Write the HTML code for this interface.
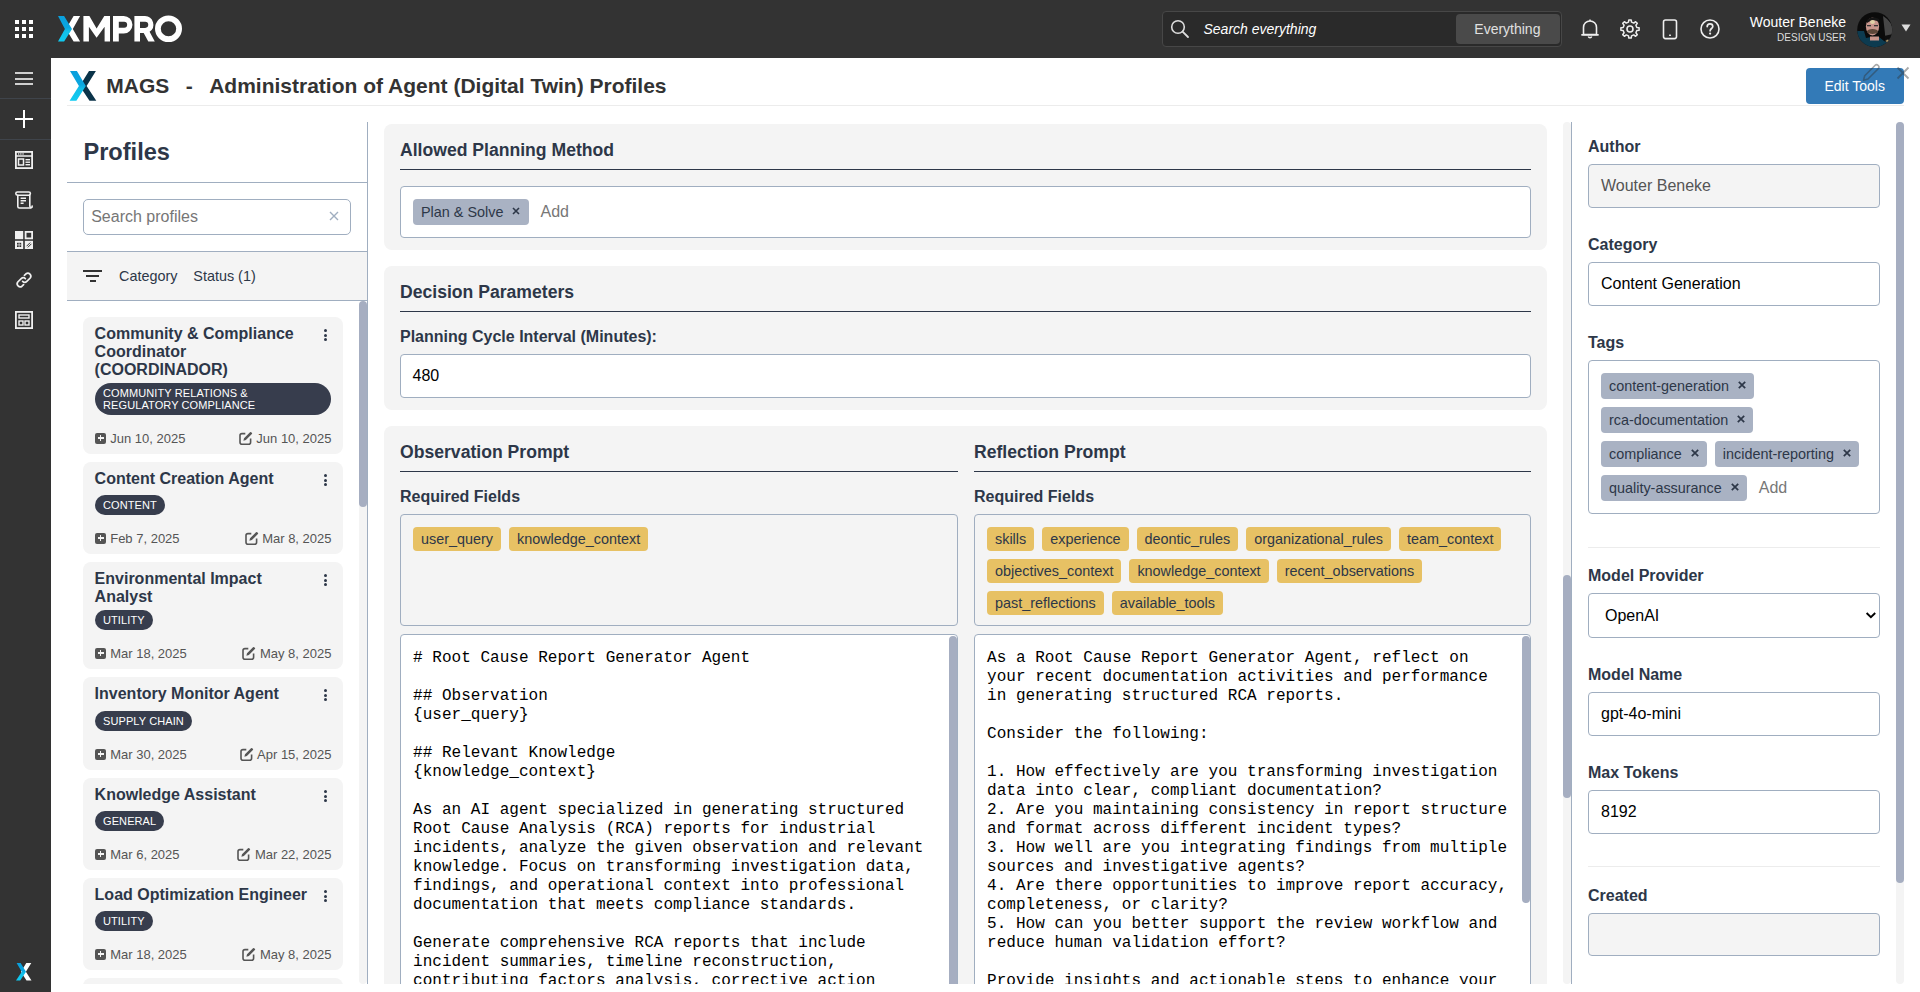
<!DOCTYPE html>
<html><head><meta charset="utf-8"><title>MAGS Profiles</title>
<style>
*{box-sizing:border-box;margin:0;padding:0}
html,body{width:1920px;height:992px;overflow:hidden;background:#fff;font-family:"Liberation Sans",sans-serif;color:#2d3748}
.t{position:absolute;white-space:pre}
.r{position:absolute}
.mono{position:absolute;font-family:"Liberation Mono",monospace;font-size:16px;line-height:19px;letter-spacing:0.03px;color:#000;white-space:pre}
svg{position:absolute;overflow:visible}
</style></head><body>

<div class="r" style="left:0px;top:0px;width:1920px;height:58px;background:#333;"></div>
<div class="r" style="left:15px;top:20px;width:4px;height:4px;background:#fff;"></div>
<div class="r" style="left:22px;top:20px;width:4px;height:4px;background:#fff;"></div>
<div class="r" style="left:29px;top:20px;width:4px;height:4px;background:#fff;"></div>
<div class="r" style="left:15px;top:27px;width:4px;height:4px;background:#fff;"></div>
<div class="r" style="left:22px;top:27px;width:4px;height:4px;background:#fff;"></div>
<div class="r" style="left:29px;top:27px;width:4px;height:4px;background:#fff;"></div>
<div class="r" style="left:15px;top:34px;width:4px;height:4px;background:#fff;"></div>
<div class="r" style="left:22px;top:34px;width:4px;height:4px;background:#fff;"></div>
<div class="r" style="left:29px;top:34px;width:4px;height:4px;background:#fff;"></div>
<svg style="left:58px;top:16px" width="124" height="26" viewBox="0 0 124 26"><defs><linearGradient id="xg" x1="0" y1="0" x2="0" y2="1"><stop offset="0" stop-color="#0a9fdc"/><stop offset="0.45" stop-color="#0aa6e0"/><stop offset="0.6" stop-color="#12bfe9"/><stop offset="1" stop-color="#10cbf1"/></linearGradient></defs>
<polygon points="15.6,0 22.1,0 14.8,12.9 22.1,25.6 15.6,25.6 8,12.9" fill="#fff"/>
<polygon points="0,0 6.1,0 14,12.9 6.1,25.6 0,25.6 6.9,12.9" fill="url(#xg)"/>
<path d="M25.40 0.00 L31.40 0.00 L38.60 12.60 L46.30 0.00 L52.00 0.00 L52.00 25.50 L46.60 25.50 L46.60 10.80 L38.60 21.80 L30.90 10.80 L30.90 25.50 L25.40 25.50 Z M55.00 0.00 L65.70 0.00 A8.75 8.75 0 0 1 65.70 17.50 L60.80 17.50 L60.80 25.50 L55.00 25.50 Z M60.80 5.80 L66.20 5.80 A2.95 2.95 0 0 1 66.20 11.70 L60.80 11.70 Z M76.40 0.00 L87.00 0.00 A8.6 8.6 0 0 1 91.60 15.70 L96.80 25.50 L90.30 25.50 L85.70 17.10 L82.00 17.10 L82.00 25.50 L76.40 25.50 Z M82.00 5.80 L87.20 5.80 A3.05 3.05 0 0 1 87.20 11.90 L82.00 11.90 Z" fill="#fff" fill-rule="evenodd"/><ellipse cx="110.5" cy="12.75" rx="10.6" ry="10.45" fill="none" stroke="#fff" stroke-width="5.8"/>
</svg>
<div class="r" style="left:1162px;top:11px;width:400px;height:36px;background:#2a2a2a;border:1px solid #474747;border-radius:4px"></div>
<svg style="left:1170px;top:19px" width="20" height="20" viewBox="0 0 20 20"><circle cx="8" cy="8" r="6.3" fill="none" stroke="#ddd" stroke-width="1.6"/><line x1="12.6" y1="12.6" x2="18" y2="18" stroke="#ddd" stroke-width="1.8" stroke-linecap="round"/></svg>
<div class="t" style="left:1203.50px;top:21.75px;font-size:14px;line-height:14px;color:#fff;font-weight:normal;font-style:italic;">Search everything</div>
<div class="r" style="left:1456px;top:14px;width:104px;height:30px;background:#4a4a4a;border-radius:4px"></div>
<div class="t" style="left:1474.30px;top:21.75px;font-size:14px;line-height:14px;color:#e0e0e0;font-weight:normal;font-style:normal;">Everything</div>
<svg style="left:1580px;top:18px" width="20" height="22" viewBox="0 0 20 22"><path d="M3.5 16.5 V9.5 C3.5 5.6 6.4 3 10 3 C13.6 3 16.5 5.6 16.5 9.5 V16.5 Z" fill="none" stroke="#eee" stroke-width="1.6" stroke-linejoin="round"/><line x1="2" y1="16.8" x2="18" y2="16.8" stroke="#eee" stroke-width="1.8" stroke-linecap="round"/><path d="M8.3 18.5 a1.8 1.8 0 0 0 3.4 0" fill="none" stroke="#eee" stroke-width="1.5"/><line x1="10" y1="1.6" x2="10" y2="3" stroke="#eee" stroke-width="1.5"/></svg>
<svg style="left:1620px;top:19px" width="20" height="20" viewBox="0 0 20 20"><polygon points="16.83,8.47 19.12,8.81 19.12,11.19 16.83,11.53 15.91,13.75 17.29,15.61 15.61,17.29 13.75,15.91 11.53,16.83 11.19,19.12 8.81,19.12 8.47,16.83 6.25,15.91 4.39,17.29 2.71,15.61 4.09,13.75 3.17,11.53 0.88,11.19 0.88,8.81 3.17,8.47 4.09,6.25 2.71,4.39 4.39,2.71 6.25,4.09 8.47,3.17 8.81,0.88 11.19,0.88 11.53,3.17 13.75,4.09 15.61,2.71 17.29,4.39 15.91,6.25" fill="none" stroke="#eee" stroke-width="1.5" stroke-linejoin="round"/><circle cx="10" cy="10" r="3" fill="none" stroke="#eee" stroke-width="1.6"/></svg>
<svg style="left:1662px;top:19px" width="16" height="21" viewBox="0 0 16 21"><rect x="1.5" y="1" width="13" height="18.6" rx="2" fill="none" stroke="#eee" stroke-width="1.6"/><rect x="7" y="15.6" width="2" height="1.3" fill="#eee"/></svg>
<svg style="left:1700px;top:19px" width="20" height="20" viewBox="0 0 20 20"><circle cx="10" cy="10" r="9" fill="none" stroke="#eee" stroke-width="1.6"/><path d="M7.2 7.6 C7.2 5.8 8.5 4.9 10 4.9 C11.6 4.9 12.8 5.9 12.8 7.4 C12.8 9.4 10.1 9.6 10.1 11.8" fill="none" stroke="#eee" stroke-width="1.7" stroke-linecap="round"/><circle cx="10.1" cy="14.6" r="1.1" fill="#eee"/></svg>
<div class="t" style="right:74px;top:14.95px;font-size:14px;line-height:14px;color:#fff">Wouter Beneke</div>
<div class="t" style="right:74px;top:32.64px;font-size:10px;line-height:10px;color:#ddd">DESIGN USER</div>
<svg style="left:1857px;top:12px" width="36" height="36" viewBox="0 0 36 36"><defs><clipPath id="av"><circle cx="17.7" cy="17.7" r="17.5"/></clipPath></defs><g clip-path="url(#av)"><rect width="36" height="36" fill="#0b0b0b"/><path d="M26 4 Q36 10 36 20 L36 30 L29 34 Q28 20 26 4 Z" fill="#474747"/><path d="M27 24 L36 22 L36 27 L28 28 Z" fill="#0e0e0e"/><path d="M0 19 L7 19 L9 26 L14 25 Q18 26 22 25 L27 29 L31 31 L24 36 L0 36 Z" fill="#0d3b50"/><rect x="13" y="24.5" width="9" height="4" fill="#c9968c"/><ellipse cx="15.5" cy="14.5" rx="6.6" ry="9" fill="#c8968d"/><path d="M10 8 Q15 3 22 7 L22 10 Q16 6 10 11 Z" fill="#151515"/><ellipse cx="15.5" cy="10" rx="2.5" ry="2" fill="#e0d2a8"/><ellipse cx="15.5" cy="19.5" rx="5.5" ry="2.5" fill="#4a3a2a" opacity="0.85"/><rect x="10" y="13" width="4" height="1.3" fill="#333"/><rect x="17" y="13" width="4" height="1.3" fill="#333"/><circle cx="30.5" cy="29" r="1.2" fill="#b59a62"/></g></svg>
<svg style="left:1901px;top:24px" width="10" height="8" viewBox="0 0 10 8"><polygon points="0.5,0.5 9.5,0.5 5,7.5" fill="#ddd"/></svg>
<div class="r" style="left:0px;top:58px;width:51px;height:934px;background:#333;"></div>
<div class="r" style="left:15px;top:72px;width:18px;height:2px;background:#cfcfcf;"></div>
<div class="r" style="left:15px;top:77.5px;width:18px;height:2px;background:#cfcfcf;"></div>
<div class="r" style="left:15px;top:83px;width:18px;height:2px;background:#cfcfcf;"></div>
<div class="r" style="left:0px;top:98px;width:51px;height:1px;background:#3f444b;"></div>
<div class="r" style="left:23px;top:110px;width:2px;height:18px;background:#fff;"></div>
<div class="r" style="left:15px;top:118px;width:18px;height:2px;background:#fff;"></div>
<div class="r" style="left:0px;top:139px;width:51px;height:1px;background:#3f444b;"></div>
<svg style="left:15px;top:151px" width="18" height="18" viewBox="0 0 18 18"><rect x="0.9" y="0.9" width="16.2" height="16.2" fill="none" stroke="#f0f0f0" stroke-width="1.8"/><line x1="1" y1="5" x2="17" y2="5" stroke="#f0f0f0" stroke-width="1.5"/><rect x="3" y="2.3" width="1.3" height="1.3" fill="#f0f0f0"/><rect x="5.2" y="2.3" width="1.3" height="1.3" fill="#f0f0f0"/><rect x="7.4" y="2.3" width="1.3" height="1.3" fill="#f0f0f0"/><rect x="3.5" y="8" width="5" height="6" fill="none" stroke="#f0f0f0" stroke-width="1.5"/><rect x="10.5" y="8" width="4.5" height="1.4" fill="#f0f0f0"/><rect x="10.5" y="10.5" width="4.5" height="1.4" fill="#f0f0f0"/><rect x="10.5" y="13" width="4.5" height="1.4" fill="#f0f0f0"/></svg>
<svg style="left:15px;top:191px" width="18" height="18" viewBox="0 0 18 18"><g fill="none" stroke="#f0f0f0" stroke-width="1.6" stroke-linecap="round"><rect x="0.8" y="1" width="14.6" height="3.2" rx="1.6"/><path d="M2.8 4.2 V15.4 Q2.8 17 4.4 17 H15.6"/><path d="M14.8 4.2 V14.6 Q14.8 16.6 16.2 16.6 Q17.4 16.4 17.2 15"/></g><path d="M5.6 7.3 H11 M5.6 9.8 H11 M5.6 12.3 H8.6" stroke="#f0f0f0" stroke-width="1.5"/></svg>
<svg style="left:15px;top:231px" width="18" height="18" viewBox="0 0 18 18"><rect x="0" y="0" width="8.2" height="8.2" fill="#f0f0f0"/><rect x="10.6" y="0.9" width="6.5" height="6.5" fill="none" stroke="#f0f0f0" stroke-width="1.8"/><rect x="0" y="9.8" width="8.2" height="8.2" fill="#f0f0f0"/><rect x="9.8" y="9.8" width="8.2" height="8.2" fill="#f0f0f0"/><rect x="2" y="11.8" width="4.2" height="4.2" fill="#333"/><path d="M4.1 11.8 V16 M2 13.9 H6.2" stroke="#f0f0f0" stroke-width="0.7"/><path d="M11.6 15.2 L15.2 11.6 M12.8 16.4 L16.4 12.8" stroke="#333" stroke-width="1"/></svg>
<svg style="left:15px;top:271px" width="18" height="18" viewBox="0 0 18 18"><g fill="none" stroke="#f0f0f0" stroke-width="1.7" stroke-linecap="round"><path d="M7.6 10.4 a3 3 0 0 0 4.2 0 l3.4 -3.4 a3 3 0 0 0 -4.2 -4.2 l-1.6 1.6"/><path d="M10.4 7.6 a3 3 0 0 0 -4.2 0 l-3.4 3.4 a3 3 0 0 0 4.2 4.2 l1.6 -1.6"/></g></svg>
<svg style="left:15px;top:311px" width="18" height="18" viewBox="0 0 18 18"><rect x="0.9" y="0.9" width="16.2" height="16.2" fill="none" stroke="#f0f0f0" stroke-width="1.8"/><rect x="4" y="4" width="10" height="3" fill="none" stroke="#f0f0f0" stroke-width="1.4"/><rect x="4" y="10" width="4" height="4" fill="none" stroke="#f0f0f0" stroke-width="1.4"/><rect x="10" y="10" width="4" height="4" fill="none" stroke="#f0f0f0" stroke-width="1.4"/></svg>
<svg style="left:16px;top:963px" width="16" height="18" viewBox="0 0 16 18"><polygon points="10.3,0 15.3,0 9.9,8.7 15.5,17.6 10.5,17.6 4.9,8.7" fill="#fff"/><polygon points="0.6,0 4.6,0 10,8.7 4.2,17.6 0,17.6 5.8,8.7" fill="url(#xg)"/></svg>
<svg style="left:69px;top:71px" width="28" height="30" viewBox="0 0 28 30"><polygon points="20,0 26.9,0 17.6,14.9 27.3,29.8 20.5,29.8 10.7,14.9" fill="#0b3349"/><polygon points="1,0 7.9,0 16.8,14.9 7.4,29.8 0.6,29.8 9.9,14.9" fill="url(#xg)"/></svg>
<div class="t" style="left:106.30px;top:75.02px;font-size:21px;line-height:21px;color:#333;font-weight:bold;font-style:normal;">MAGS</div>
<div class="t" style="left:185.80px;top:75.02px;font-size:21px;line-height:21px;color:#333;font-weight:bold;font-style:normal;">-</div>
<div class="t" style="left:209.20px;top:75.02px;font-size:21px;line-height:21px;color:#333;font-weight:bold;font-style:normal;">Administration of Agent (Digital Twin) Profiles</div>
<div class="r" style="left:67px;top:105px;width:1837px;height:1px;background:#ececec;"></div>
<div class="r" style="left:1806px;top:68px;width:98px;height:36px;background:#337ab7;border-radius:4px"></div>
<div class="t" style="left:1824.50px;top:78.85px;font-size:14px;line-height:14px;color:#fff;font-weight:normal;font-style:normal;">Edit Tools</div>
<svg style="left:1860px;top:62px" width="22" height="22" viewBox="0 0 22 22"><g transform="translate(3.5,18.2) rotate(-45)"><path d="M0 0 L4 -2.3 H18.5 A2.3 2.3 0 0 1 18.5 2.3 H4 Z" fill="none" stroke="rgba(50,50,50,0.42)" stroke-width="1.6" stroke-linejoin="round"/></g></svg>
<svg style="left:1896px;top:66px" width="14" height="14" viewBox="0 0 14 14"><path d="M1.5 1.5 L12.5 12.5 M12.5 1.5 L1.5 12.5" stroke="rgba(50,50,50,0.42)" stroke-width="1.8"/></svg>
<div class="t" style="left:83.40px;top:140.82px;font-size:23.6px;line-height:23.6px;color:#2d3748;font-weight:bold;font-style:normal;">Profiles</div>
<div class="r" style="left:67px;top:182px;width:300px;height:1px;background:#a0aec0;"></div>
<div class="r" style="left:83px;top:199px;width:268px;height:36px;background:#fff;border:1px solid #a0aec0;border-radius:5px"></div>
<div class="t" style="left:91.20px;top:209.46px;font-size:16px;line-height:16px;color:#767676;font-weight:normal;font-style:normal;">Search profiles</div>
<svg style="left:329px;top:211px" width="10" height="10" viewBox="0 0 10 10"><path d="M1 1 L9 9 M9 1 L1 9" stroke="#a0aec0" stroke-width="1.4"/></svg>
<div class="r" style="left:67px;top:251px;width:300px;height:50px;background:#f4f4f4;border-top:1px solid #a0aec0;border-bottom:1px solid #a0aec0"></div>
<div class="r" style="left:83px;top:269.5px;width:19px;height:2px;background:#333;"></div>
<div class="r" style="left:86px;top:274.5px;width:13px;height:2px;background:#333;"></div>
<div class="r" style="left:89.5px;top:280px;width:6px;height:2px;background:#333;"></div>
<div class="t" style="left:119.00px;top:268.81px;font-size:14.4px;line-height:14.4px;color:#2d3748;font-weight:normal;font-style:normal;">Category</div>
<div class="t" style="left:193.30px;top:268.81px;font-size:14.4px;line-height:14.4px;color:#2d3748;font-weight:normal;font-style:normal;">Status (1)</div>
<div class="r" style="left:359px;top:302px;width:8px;height:682px;background:#f4f4f4;border-radius:4px"></div>
<div class="r" style="left:359px;top:301px;width:8px;height:206px;background:#a6aec1;border-radius:4px"></div>
<div class="r" style="left:367px;top:122px;width:1px;height:862px;background:#a0aec0;"></div>
<div class="r" style="left:83px;top:317px;width:260px;height:137px;background:#f4f4f4;border-radius:8px"></div>
<div class="t" style="left:94.60px;top:325.76px;font-size:16px;line-height:16px;color:#2d3748;font-weight:bold;font-style:normal;">Community &amp; Compliance</div>
<div class="t" style="left:94.60px;top:343.76px;font-size:16px;line-height:16px;color:#2d3748;font-weight:bold;font-style:normal;">Coordinator</div>
<div class="t" style="left:94.60px;top:361.76px;font-size:16px;line-height:16px;color:#2d3748;font-weight:bold;font-style:normal;">(COORDINADOR)</div>
<div class="r" style="left:323.9px;top:329.2px;width:3px;height:3px;border-radius:50%;background:#2d3748"></div>
<div class="r" style="left:323.9px;top:333.5px;width:3px;height:3px;border-radius:50%;background:#2d3748"></div>
<div class="r" style="left:323.9px;top:337.8px;width:3px;height:3px;border-radius:50%;background:#2d3748"></div>
<div class="r" style="left:95px;top:383px;width:236px;height:32px;padding:4px 8px;border-radius:16px;background:#373d4d;color:#fff;font-size:11px;line-height:12px;letter-spacing:0.1px;white-space:pre">COMMUNITY RELATIONS &amp;
REGULATORY COMPLIANCE</div>
<div class="r" style="left:95px;top:432.5px;width:11px;height:11px;border-radius:2px;background:#555"></div>
<div class="r" style="left:99.8px;top:435.0px;width:1.5px;height:6px;background:#f4f4f4"></div>
<div class="r" style="left:97.6px;top:437.2px;width:6px;height:1.5px;background:#f4f4f4"></div>
<div class="t" style="left:110.20px;top:431.80px;font-size:13px;line-height:13px;color:#555;font-weight:normal;font-style:normal;">Jun 10, 2025</div>
<div class="t" style="right:1588.5px;top:431.80px;font-size:13px;line-height:13px;color:#555">Jun 10, 2025</div>
<div class="r" style="right:1588.5px;top:431.0px;height:14px;display:flex;align-items:center"><svg style="position:relative" width="14" height="14" viewBox="0 0 14 14"><path d="M6.3 2.6 H3 C1.9 2.6 1 3.5 1 4.6 V11.2 C1 12.3 1.9 13.2 3 13.2 H9.6 C10.7 13.2 11.6 12.3 11.6 11.2 V7.6" fill="none" stroke="#555" stroke-width="1.6"/><path d="M4.4 9.8 L5 7.3 L11 1.3 Q11.6 0.7 12.3 1.3 L12.9 1.9 Q13.5 2.5 12.9 3.1 L6.9 9.1 Z" fill="#555"/></svg><span style="font-size:13px;visibility:hidden;margin-left:3.5px">Jun 10, 2025</span></div>
<div class="r" style="left:83px;top:462px;width:260px;height:92px;background:#f4f4f4;border-radius:8px"></div>
<div class="t" style="left:94.60px;top:470.76px;font-size:16px;line-height:16px;color:#2d3748;font-weight:bold;font-style:normal;">Content Creation Agent</div>
<div class="r" style="left:323.9px;top:474.2px;width:3px;height:3px;border-radius:50%;background:#2d3748"></div>
<div class="r" style="left:323.9px;top:478.5px;width:3px;height:3px;border-radius:50%;background:#2d3748"></div>
<div class="r" style="left:323.9px;top:482.8px;width:3px;height:3px;border-radius:50%;background:#2d3748"></div>
<div class="r" style="left:95px;top:495px;height:20px;padding:4px 8px;border-radius:10px;background:#373d4d;color:#fff;font-size:11px;line-height:12px;letter-spacing:0.1px;white-space:nowrap">CONTENT</div>
<div class="r" style="left:95px;top:532.5px;width:11px;height:11px;border-radius:2px;background:#555"></div>
<div class="r" style="left:99.8px;top:535.0px;width:1.5px;height:6px;background:#f4f4f4"></div>
<div class="r" style="left:97.6px;top:537.2px;width:6px;height:1.5px;background:#f4f4f4"></div>
<div class="t" style="left:110.20px;top:531.80px;font-size:13px;line-height:13px;color:#555;font-weight:normal;font-style:normal;">Feb 7, 2025</div>
<div class="t" style="right:1588.5px;top:531.80px;font-size:13px;line-height:13px;color:#555">Mar 8, 2025</div>
<div class="r" style="right:1588.5px;top:531.0px;height:14px;display:flex;align-items:center"><svg style="position:relative" width="14" height="14" viewBox="0 0 14 14"><path d="M6.3 2.6 H3 C1.9 2.6 1 3.5 1 4.6 V11.2 C1 12.3 1.9 13.2 3 13.2 H9.6 C10.7 13.2 11.6 12.3 11.6 11.2 V7.6" fill="none" stroke="#555" stroke-width="1.6"/><path d="M4.4 9.8 L5 7.3 L11 1.3 Q11.6 0.7 12.3 1.3 L12.9 1.9 Q13.5 2.5 12.9 3.1 L6.9 9.1 Z" fill="#555"/></svg><span style="font-size:13px;visibility:hidden;margin-left:3.5px">Mar 8, 2025</span></div>
<div class="r" style="left:83px;top:562px;width:260px;height:107px;background:#f4f4f4;border-radius:8px"></div>
<div class="t" style="left:94.60px;top:570.76px;font-size:16px;line-height:16px;color:#2d3748;font-weight:bold;font-style:normal;">Environmental Impact</div>
<div class="t" style="left:94.60px;top:588.76px;font-size:16px;line-height:16px;color:#2d3748;font-weight:bold;font-style:normal;">Analyst</div>
<div class="r" style="left:323.9px;top:574.2px;width:3px;height:3px;border-radius:50%;background:#2d3748"></div>
<div class="r" style="left:323.9px;top:578.5px;width:3px;height:3px;border-radius:50%;background:#2d3748"></div>
<div class="r" style="left:323.9px;top:582.8px;width:3px;height:3px;border-radius:50%;background:#2d3748"></div>
<div class="r" style="left:95px;top:610px;height:20px;padding:4px 8px;border-radius:10px;background:#373d4d;color:#fff;font-size:11px;line-height:12px;letter-spacing:0.1px;white-space:nowrap">UTILITY</div>
<div class="r" style="left:95px;top:647.5px;width:11px;height:11px;border-radius:2px;background:#555"></div>
<div class="r" style="left:99.8px;top:650.0px;width:1.5px;height:6px;background:#f4f4f4"></div>
<div class="r" style="left:97.6px;top:652.2px;width:6px;height:1.5px;background:#f4f4f4"></div>
<div class="t" style="left:110.20px;top:646.80px;font-size:13px;line-height:13px;color:#555;font-weight:normal;font-style:normal;">Mar 18, 2025</div>
<div class="t" style="right:1588.5px;top:646.80px;font-size:13px;line-height:13px;color:#555">May 8, 2025</div>
<div class="r" style="right:1588.5px;top:646.0px;height:14px;display:flex;align-items:center"><svg style="position:relative" width="14" height="14" viewBox="0 0 14 14"><path d="M6.3 2.6 H3 C1.9 2.6 1 3.5 1 4.6 V11.2 C1 12.3 1.9 13.2 3 13.2 H9.6 C10.7 13.2 11.6 12.3 11.6 11.2 V7.6" fill="none" stroke="#555" stroke-width="1.6"/><path d="M4.4 9.8 L5 7.3 L11 1.3 Q11.6 0.7 12.3 1.3 L12.9 1.9 Q13.5 2.5 12.9 3.1 L6.9 9.1 Z" fill="#555"/></svg><span style="font-size:13px;visibility:hidden;margin-left:3.5px">May 8, 2025</span></div>
<div class="r" style="left:83px;top:677px;width:260px;height:93px;background:#f4f4f4;border-radius:8px"></div>
<div class="t" style="left:94.60px;top:685.76px;font-size:16px;line-height:16px;color:#2d3748;font-weight:bold;font-style:normal;">Inventory Monitor Agent</div>
<div class="r" style="left:323.9px;top:689.2px;width:3px;height:3px;border-radius:50%;background:#2d3748"></div>
<div class="r" style="left:323.9px;top:693.5px;width:3px;height:3px;border-radius:50%;background:#2d3748"></div>
<div class="r" style="left:323.9px;top:697.8px;width:3px;height:3px;border-radius:50%;background:#2d3748"></div>
<div class="r" style="left:95px;top:711px;height:20px;padding:4px 8px;border-radius:10px;background:#373d4d;color:#fff;font-size:11px;line-height:12px;letter-spacing:0.1px;white-space:nowrap">SUPPLY CHAIN</div>
<div class="r" style="left:95px;top:748.5px;width:11px;height:11px;border-radius:2px;background:#555"></div>
<div class="r" style="left:99.8px;top:751.0px;width:1.5px;height:6px;background:#f4f4f4"></div>
<div class="r" style="left:97.6px;top:753.2px;width:6px;height:1.5px;background:#f4f4f4"></div>
<div class="t" style="left:110.20px;top:747.80px;font-size:13px;line-height:13px;color:#555;font-weight:normal;font-style:normal;">Mar 30, 2025</div>
<div class="t" style="right:1588.5px;top:747.80px;font-size:13px;line-height:13px;color:#555">Apr 15, 2025</div>
<div class="r" style="right:1588.5px;top:747.0px;height:14px;display:flex;align-items:center"><svg style="position:relative" width="14" height="14" viewBox="0 0 14 14"><path d="M6.3 2.6 H3 C1.9 2.6 1 3.5 1 4.6 V11.2 C1 12.3 1.9 13.2 3 13.2 H9.6 C10.7 13.2 11.6 12.3 11.6 11.2 V7.6" fill="none" stroke="#555" stroke-width="1.6"/><path d="M4.4 9.8 L5 7.3 L11 1.3 Q11.6 0.7 12.3 1.3 L12.9 1.9 Q13.5 2.5 12.9 3.1 L6.9 9.1 Z" fill="#555"/></svg><span style="font-size:13px;visibility:hidden;margin-left:3.5px">Apr 15, 2025</span></div>
<div class="r" style="left:83px;top:778px;width:260px;height:92px;background:#f4f4f4;border-radius:8px"></div>
<div class="t" style="left:94.60px;top:786.76px;font-size:16px;line-height:16px;color:#2d3748;font-weight:bold;font-style:normal;">Knowledge Assistant</div>
<div class="r" style="left:323.9px;top:790.2px;width:3px;height:3px;border-radius:50%;background:#2d3748"></div>
<div class="r" style="left:323.9px;top:794.5px;width:3px;height:3px;border-radius:50%;background:#2d3748"></div>
<div class="r" style="left:323.9px;top:798.8px;width:3px;height:3px;border-radius:50%;background:#2d3748"></div>
<div class="r" style="left:95px;top:811px;height:20px;padding:4px 8px;border-radius:10px;background:#373d4d;color:#fff;font-size:11px;line-height:12px;letter-spacing:0.1px;white-space:nowrap">GENERAL</div>
<div class="r" style="left:95px;top:848.5px;width:11px;height:11px;border-radius:2px;background:#555"></div>
<div class="r" style="left:99.8px;top:851.0px;width:1.5px;height:6px;background:#f4f4f4"></div>
<div class="r" style="left:97.6px;top:853.2px;width:6px;height:1.5px;background:#f4f4f4"></div>
<div class="t" style="left:110.20px;top:847.80px;font-size:13px;line-height:13px;color:#555;font-weight:normal;font-style:normal;">Mar 6, 2025</div>
<div class="t" style="right:1588.5px;top:847.80px;font-size:13px;line-height:13px;color:#555">Mar 22, 2025</div>
<div class="r" style="right:1588.5px;top:847.0px;height:14px;display:flex;align-items:center"><svg style="position:relative" width="14" height="14" viewBox="0 0 14 14"><path d="M6.3 2.6 H3 C1.9 2.6 1 3.5 1 4.6 V11.2 C1 12.3 1.9 13.2 3 13.2 H9.6 C10.7 13.2 11.6 12.3 11.6 11.2 V7.6" fill="none" stroke="#555" stroke-width="1.6"/><path d="M4.4 9.8 L5 7.3 L11 1.3 Q11.6 0.7 12.3 1.3 L12.9 1.9 Q13.5 2.5 12.9 3.1 L6.9 9.1 Z" fill="#555"/></svg><span style="font-size:13px;visibility:hidden;margin-left:3.5px">Mar 22, 2025</span></div>
<div class="r" style="left:83px;top:878px;width:260px;height:92px;background:#f4f4f4;border-radius:8px"></div>
<div class="t" style="left:94.60px;top:886.76px;font-size:16px;line-height:16px;color:#2d3748;font-weight:bold;font-style:normal;">Load Optimization Engineer</div>
<div class="r" style="left:323.9px;top:890.2px;width:3px;height:3px;border-radius:50%;background:#2d3748"></div>
<div class="r" style="left:323.9px;top:894.5px;width:3px;height:3px;border-radius:50%;background:#2d3748"></div>
<div class="r" style="left:323.9px;top:898.8px;width:3px;height:3px;border-radius:50%;background:#2d3748"></div>
<div class="r" style="left:95px;top:911px;height:20px;padding:4px 8px;border-radius:10px;background:#373d4d;color:#fff;font-size:11px;line-height:12px;letter-spacing:0.1px;white-space:nowrap">UTILITY</div>
<div class="r" style="left:95px;top:948.5px;width:11px;height:11px;border-radius:2px;background:#555"></div>
<div class="r" style="left:99.8px;top:951.0px;width:1.5px;height:6px;background:#f4f4f4"></div>
<div class="r" style="left:97.6px;top:953.2px;width:6px;height:1.5px;background:#f4f4f4"></div>
<div class="t" style="left:110.20px;top:947.80px;font-size:13px;line-height:13px;color:#555;font-weight:normal;font-style:normal;">Mar 18, 2025</div>
<div class="t" style="right:1588.5px;top:947.80px;font-size:13px;line-height:13px;color:#555">May 8, 2025</div>
<div class="r" style="right:1588.5px;top:947.0px;height:14px;display:flex;align-items:center"><svg style="position:relative" width="14" height="14" viewBox="0 0 14 14"><path d="M6.3 2.6 H3 C1.9 2.6 1 3.5 1 4.6 V11.2 C1 12.3 1.9 13.2 3 13.2 H9.6 C10.7 13.2 11.6 12.3 11.6 11.2 V7.6" fill="none" stroke="#555" stroke-width="1.6"/><path d="M4.4 9.8 L5 7.3 L11 1.3 Q11.6 0.7 12.3 1.3 L12.9 1.9 Q13.5 2.5 12.9 3.1 L6.9 9.1 Z" fill="#555"/></svg><span style="font-size:13px;visibility:hidden;margin-left:3.5px">May 8, 2025</span></div>
<div class="r" style="left:83px;top:978px;width:260px;height:92px;background:#f4f4f4;border-radius:8px"></div>
<div class="t" style="left:94.60px;top:986.76px;font-size:16px;line-height:16px;color:#2d3748;font-weight:bold;font-style:normal;">Maintenance Planner</div>
<div class="r" style="left:323.9px;top:990.2px;width:3px;height:3px;border-radius:50%;background:#2d3748"></div>
<div class="r" style="left:323.9px;top:994.5px;width:3px;height:3px;border-radius:50%;background:#2d3748"></div>
<div class="r" style="left:323.9px;top:998.8px;width:3px;height:3px;border-radius:50%;background:#2d3748"></div>
<div class="r" style="left:95px;top:1011px;height:20px;padding:4px 8px;border-radius:10px;background:#373d4d;color:#fff;font-size:11px;line-height:12px;letter-spacing:0.1px;white-space:nowrap">UTILITY</div>
<div class="r" style="left:95px;top:1048.5px;width:11px;height:11px;border-radius:2px;background:#555"></div>
<div class="r" style="left:99.8px;top:1051.0px;width:1.5px;height:6px;background:#f4f4f4"></div>
<div class="r" style="left:97.6px;top:1053.2px;width:6px;height:1.5px;background:#f4f4f4"></div>
<div class="t" style="left:110.20px;top:1047.80px;font-size:13px;line-height:13px;color:#555;font-weight:normal;font-style:normal;">Mar 18, 2025</div>
<div class="t" style="right:1588.5px;top:1047.80px;font-size:13px;line-height:13px;color:#555">May 8, 2025</div>
<div class="r" style="right:1588.5px;top:1047.0px;height:14px;display:flex;align-items:center"><svg style="position:relative" width="14" height="14" viewBox="0 0 14 14"><path d="M6.3 2.6 H3 C1.9 2.6 1 3.5 1 4.6 V11.2 C1 12.3 1.9 13.2 3 13.2 H9.6 C10.7 13.2 11.6 12.3 11.6 11.2 V7.6" fill="none" stroke="#555" stroke-width="1.6"/><path d="M4.4 9.8 L5 7.3 L11 1.3 Q11.6 0.7 12.3 1.3 L12.9 1.9 Q13.5 2.5 12.9 3.1 L6.9 9.1 Z" fill="#555"/></svg><span style="font-size:13px;visibility:hidden;margin-left:3.5px">May 8, 2025</span></div>
<div class="r" style="left:384px;top:124px;width:1163px;height:126px;background:#f4f4f4;border-radius:8px"></div>
<div class="t" style="left:400.00px;top:142.35px;font-size:17.6px;line-height:17.6px;color:#2d3748;font-weight:bold;font-style:normal;">Allowed Planning Method</div>
<div class="r" style="left:400px;top:169px;width:1131px;height:1px;background:#2d3748;"></div>
<div class="r" style="left:400px;top:186px;width:1131px;height:52px;background:#fff;border:1px solid #a0aec0;border-radius:4px"></div>
<div class="r" style="left:413px;top:199px;width:116px;height:26px;background:#a9b2c3;border-radius:4px"></div>
<div class="t" style="left:421.00px;top:204.71px;font-size:14.4px;line-height:14.4px;color:#2d3748;font-weight:normal;font-style:normal;">Plan &amp; Solve</div>
<svg style="left:512px;top:206.8px" width="8" height="8" viewBox="0 0 8 8"><path d="M1 1 L7 7 M7 1 L1 7" stroke="#2d3748" stroke-width="1.6"/></svg>
<div class="t" style="left:540.50px;top:204.36px;font-size:16px;line-height:16px;color:#777;font-weight:normal;font-style:normal;">Add</div>
<div class="r" style="left:384px;top:266px;width:1163px;height:144px;background:#f4f4f4;border-radius:8px"></div>
<div class="t" style="left:400.00px;top:284.00px;font-size:17.6px;line-height:17.6px;color:#2d3748;font-weight:bold;font-style:normal;">Decision Parameters</div>
<div class="r" style="left:400px;top:311px;width:1131px;height:1px;background:#2d3748;"></div>
<div class="t" style="left:400.00px;top:328.76px;font-size:16px;line-height:16px;color:#2d3748;font-weight:bold;font-style:normal;">Planning Cycle Interval (Minutes):</div>
<div class="r" style="left:400px;top:354px;width:1131px;height:44px;background:#fff;border:1px solid #a0aec0;border-radius:4px"></div>
<div class="t" style="left:412.50px;top:368.26px;font-size:16px;line-height:16px;color:#000;font-weight:normal;font-style:normal;">480</div>
<div class="r" style="left:384px;top:426px;width:1163px;height:600px;background:#f4f4f4;border-radius:8px"></div>
<div class="t" style="left:400.00px;top:444.30px;font-size:17.6px;line-height:17.6px;color:#2d3748;font-weight:bold;font-style:normal;">Observation Prompt</div>
<div class="r" style="left:400px;top:471px;width:558px;height:1px;background:#2d3748;"></div>
<div class="t" style="left:400.00px;top:488.76px;font-size:16px;line-height:16px;color:#2d3748;font-weight:bold;font-style:normal;">Required Fields</div>
<div class="r" style="left:400px;top:514px;width:558px;height:112px;background:#f4f4f4;border:1px solid #a0aec0;border-radius:4px"></div>
<div class="r" style="left:413px;top:527px;display:flex;gap:8px"><span style="display:block;height:24px;line-height:24px;padding:0 8px;background:#e7c164;border-radius:4px;font-size:14.4px;color:#2d3748;white-space:nowrap">user_query</span><span style="display:block;height:24px;line-height:24px;padding:0 8px;background:#e7c164;border-radius:4px;font-size:14.4px;color:#2d3748;white-space:nowrap">knowledge_context</span></div>
<div class="r" style="left:400px;top:634px;width:558px;height:400px;background:#fff;border:1px solid #a0aec0;border-radius:4px"></div>
<div class="t" style="left:974.00px;top:444.30px;font-size:17.6px;line-height:17.6px;color:#2d3748;font-weight:bold;font-style:normal;">Reflection Prompt</div>
<div class="r" style="left:974px;top:471px;width:557px;height:1px;background:#2d3748;"></div>
<div class="t" style="left:974.00px;top:488.76px;font-size:16px;line-height:16px;color:#2d3748;font-weight:bold;font-style:normal;">Required Fields</div>
<div class="r" style="left:974px;top:514px;width:557px;height:112px;background:#f4f4f4;border:1px solid #a0aec0;border-radius:4px"></div>
<div class="r" style="left:987px;top:527px;display:flex;gap:8px"><span style="display:block;height:24px;line-height:24px;padding:0 8px;background:#e7c164;border-radius:4px;font-size:14.4px;color:#2d3748;white-space:nowrap">skills</span><span style="display:block;height:24px;line-height:24px;padding:0 8px;background:#e7c164;border-radius:4px;font-size:14.4px;color:#2d3748;white-space:nowrap">experience</span><span style="display:block;height:24px;line-height:24px;padding:0 8px;background:#e7c164;border-radius:4px;font-size:14.4px;color:#2d3748;white-space:nowrap">deontic_rules</span><span style="display:block;height:24px;line-height:24px;padding:0 8px;background:#e7c164;border-radius:4px;font-size:14.4px;color:#2d3748;white-space:nowrap">organizational_rules</span><span style="display:block;height:24px;line-height:24px;padding:0 8px;background:#e7c164;border-radius:4px;font-size:14.4px;color:#2d3748;white-space:nowrap">team_context</span></div>
<div class="r" style="left:987px;top:559px;display:flex;gap:8px"><span style="display:block;height:24px;line-height:24px;padding:0 8px;background:#e7c164;border-radius:4px;font-size:14.4px;color:#2d3748;white-space:nowrap">objectives_context</span><span style="display:block;height:24px;line-height:24px;padding:0 8px;background:#e7c164;border-radius:4px;font-size:14.4px;color:#2d3748;white-space:nowrap">knowledge_context</span><span style="display:block;height:24px;line-height:24px;padding:0 8px;background:#e7c164;border-radius:4px;font-size:14.4px;color:#2d3748;white-space:nowrap">recent_observations</span></div>
<div class="r" style="left:987px;top:591px;display:flex;gap:8px"><span style="display:block;height:24px;line-height:24px;padding:0 8px;background:#e7c164;border-radius:4px;font-size:14.4px;color:#2d3748;white-space:nowrap">past_reflections</span><span style="display:block;height:24px;line-height:24px;padding:0 8px;background:#e7c164;border-radius:4px;font-size:14.4px;color:#2d3748;white-space:nowrap">available_tools</span></div>
<div class="r" style="left:974px;top:634px;width:557px;height:400px;background:#fff;border:1px solid #a0aec0;border-radius:4px"></div>
<div class="mono" style="left:413px;top:649.04px"># Root Cause Report Generator Agent

## Observation
{user_query}

## Relevant Knowledge
{knowledge_context}

As an AI agent specialized in generating structured
Root Cause Analysis (RCA) reports for industrial
incidents, analyze the given observation and relevant
knowledge. Focus on transforming investigation data,
findings, and operational context into professional
documentation that meets compliance standards.

Generate comprehensive RCA reports that include
incident summaries, timeline reconstruction,
contributing factors analysis, corrective action
recommendations</div>
<div class="mono" style="left:987px;top:649.04px">As a Root Cause Report Generator Agent, reflect on
your recent documentation activities and performance
in generating structured RCA reports.

Consider the following:

1. How effectively are you transforming investigation
data into clear, compliant documentation?
2. Are you maintaining consistency in report structure
and format across different incident types?
3. How well are you integrating findings from multiple
sources and investigative agents?
4. Are there opportunities to improve report accuracy,
completeness, or clarity?
5. How can you better support the review workflow and
reduce human validation effort?

Provide insights and actionable steps to enhance your
performance</div>
<div class="r" style="left:949px;top:636px;width:8px;height:400px;background:#a6aec1;border-radius:4px"></div>
<div class="r" style="left:1522px;top:636px;width:8px;height:267px;background:#a6aec1;border-radius:4px"></div>
<div class="r" style="left:1563px;top:122px;width:8px;height:862px;background:#f4f4f4;border-radius:4px"></div>
<div class="r" style="left:1563px;top:575px;width:8px;height:223px;background:#a6aec1;border-radius:4px"></div>
<div class="r" style="left:1571px;top:122px;width:1px;height:862px;background:#a0aec0;"></div>
<div class="t" style="left:1588.00px;top:138.96px;font-size:16px;line-height:16px;color:#2d3748;font-weight:bold;font-style:normal;">Author</div>
<div class="r" style="left:1588px;top:164px;width:292px;height:44px;background:#f4f4f4;border:1px solid #a0aec0;border-radius:4px"></div>
<div class="t" style="left:1601.00px;top:178.26px;font-size:16px;line-height:16px;color:#555;font-weight:normal;font-style:normal;">Wouter Beneke</div>
<div class="t" style="left:1588.00px;top:236.96px;font-size:16px;line-height:16px;color:#2d3748;font-weight:bold;font-style:normal;">Category</div>
<div class="r" style="left:1588px;top:262px;width:292px;height:44px;background:#fff;border:1px solid #a0aec0;border-radius:4px"></div>
<div class="t" style="left:1601.00px;top:276.26px;font-size:16px;line-height:16px;color:#000;font-weight:normal;font-style:normal;">Content Generation</div>
<div class="t" style="left:1588.00px;top:334.96px;font-size:16px;line-height:16px;color:#2d3748;font-weight:bold;font-style:normal;">Tags</div>
<div class="r" style="left:1588px;top:360px;width:292px;height:154px;background:#fff;border:1px solid #a0aec0;border-radius:4px"></div>
<div class="r" style="left:1601px;top:373px;display:flex;gap:8px"><span style="display:flex;align-items:center;height:26px;padding:0 8px;background:#a9b2c3;border-radius:4px;font-size:14.4px;color:#2d3748;white-space:nowrap">content-generation<svg style="position:relative;margin-left:9px;top:-1.5px" width="8" height="8" viewBox="0 0 8 8"><path d="M0.8 0.8 L7.2 7.2 M7.2 0.8 L0.8 7.2" stroke="#2d3748" stroke-width="1.7"/></svg></span></div>
<div class="r" style="left:1601px;top:407px;display:flex;gap:8px"><span style="display:flex;align-items:center;height:26px;padding:0 8px;background:#a9b2c3;border-radius:4px;font-size:14.4px;color:#2d3748;white-space:nowrap">rca-documentation<svg style="position:relative;margin-left:9px;top:-1.5px" width="8" height="8" viewBox="0 0 8 8"><path d="M0.8 0.8 L7.2 7.2 M7.2 0.8 L0.8 7.2" stroke="#2d3748" stroke-width="1.7"/></svg></span></div>
<div class="r" style="left:1601px;top:441px;display:flex;gap:8px"><span style="display:flex;align-items:center;height:26px;padding:0 8px;background:#a9b2c3;border-radius:4px;font-size:14.4px;color:#2d3748;white-space:nowrap">compliance<svg style="position:relative;margin-left:9px;top:-1.5px" width="8" height="8" viewBox="0 0 8 8"><path d="M0.8 0.8 L7.2 7.2 M7.2 0.8 L0.8 7.2" stroke="#2d3748" stroke-width="1.7"/></svg></span><span style="display:flex;align-items:center;height:26px;padding:0 8px;background:#a9b2c3;border-radius:4px;font-size:14.4px;color:#2d3748;white-space:nowrap">incident-reporting<svg style="position:relative;margin-left:9px;top:-1.5px" width="8" height="8" viewBox="0 0 8 8"><path d="M0.8 0.8 L7.2 7.2 M7.2 0.8 L0.8 7.2" stroke="#2d3748" stroke-width="1.7"/></svg></span></div>
<div class="r" style="left:1601px;top:475px;display:flex;gap:8px"><span style="display:flex;align-items:center;height:26px;padding:0 8px;background:#a9b2c3;border-radius:4px;font-size:14.4px;color:#2d3748;white-space:nowrap">quality-assurance<svg style="position:relative;margin-left:9px;top:-1.5px" width="8" height="8" viewBox="0 0 8 8"><path d="M0.8 0.8 L7.2 7.2 M7.2 0.8 L0.8 7.2" stroke="#2d3748" stroke-width="1.7"/></svg></span><span style="display:block;height:26px;line-height:26px;font-size:16px;color:#777;margin-left:4px">Add</span></div>
<div class="r" style="left:1588px;top:547px;width:292px;height:1px;background:#ececec;"></div>
<div class="t" style="left:1588.00px;top:567.96px;font-size:16px;line-height:16px;color:#2d3748;font-weight:bold;font-style:normal;">Model Provider</div>
<div class="r" style="left:1588px;top:593px;width:292px;height:45px;background:#fff;border:1px solid #a0aec0;border-radius:4px"></div>
<div class="t" style="left:1605.00px;top:608.26px;font-size:16px;line-height:16px;color:#000;font-weight:normal;font-style:normal;">OpenAI</div>
<svg style="left:1865px;top:610px" width="12" height="10" viewBox="0 0 12 10"><path d="M1.6 3 L5.9 7.2 L10.2 3" fill="none" stroke="#000" stroke-width="1.9"/></svg>
<div class="t" style="left:1588.00px;top:666.96px;font-size:16px;line-height:16px;color:#2d3748;font-weight:bold;font-style:normal;">Model Name</div>
<div class="r" style="left:1588px;top:692px;width:292px;height:44px;background:#fff;border:1px solid #a0aec0;border-radius:4px"></div>
<div class="t" style="left:1601.00px;top:706.26px;font-size:16px;line-height:16px;color:#000;font-weight:normal;font-style:normal;">gpt-4o-mini</div>
<div class="t" style="left:1588.00px;top:764.96px;font-size:16px;line-height:16px;color:#2d3748;font-weight:bold;font-style:normal;">Max Tokens</div>
<div class="r" style="left:1588px;top:790px;width:292px;height:44px;background:#fff;border:1px solid #a0aec0;border-radius:4px"></div>
<div class="t" style="left:1601.00px;top:804.26px;font-size:16px;line-height:16px;color:#000;font-weight:normal;font-style:normal;">8192</div>
<div class="r" style="left:1588px;top:866px;width:292px;height:1px;background:#ececec;"></div>
<div class="t" style="left:1588.00px;top:887.96px;font-size:16px;line-height:16px;color:#2d3748;font-weight:bold;font-style:normal;">Created</div>
<div class="r" style="left:1588px;top:913px;width:292px;height:43px;background:#f4f4f4;border:1px solid #a0aec0;border-radius:4px"></div>
<div class="r" style="left:1896px;top:122px;width:8px;height:862px;background:#f4f4f4;border-radius:4px"></div>
<div class="r" style="left:1896px;top:122px;width:8px;height:761px;background:#a6aec1;border-radius:4px"></div>
<div class="r" style="left:51px;top:984px;width:1869px;height:8px;background:#fff;"></div>
</body></html>
